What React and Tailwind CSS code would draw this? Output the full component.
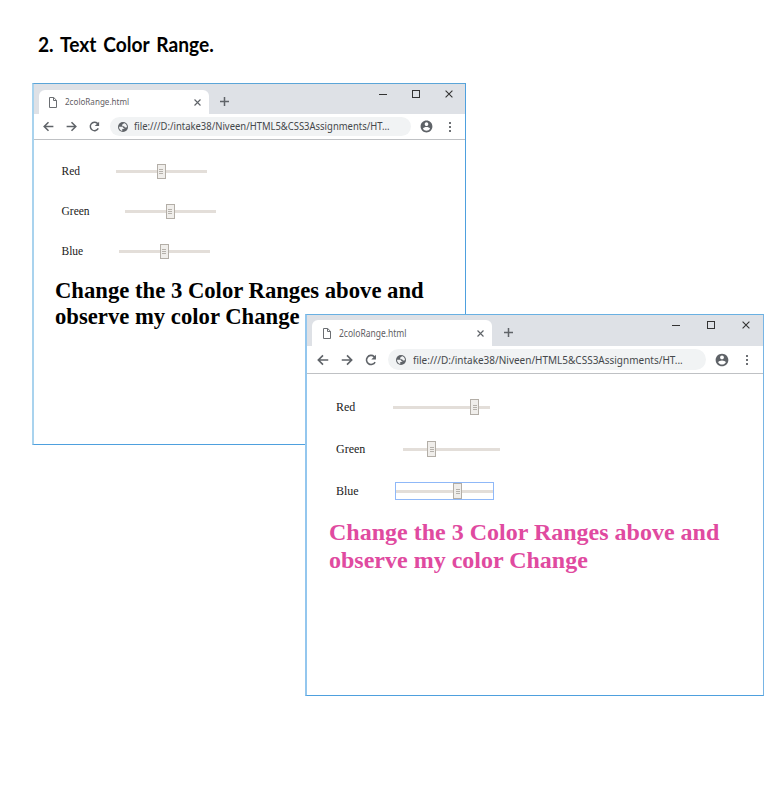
import React from "react";

const small = {
  frame: "left-[32px] top-[83px] w-[434px] h-[362px] border-l-2 border-l-[#a9d3ee] border-t-[#5ba5d8] border-r-[#4ea0de] border-b-[#4ea0de]",
  strip: "h-[30px]",
  tab: "ml-[5px] mt-[6px] w-[170px] h-[24px] pl-[10px] pr-[8px]",
  tabText: "text-[9.5px] ml-[8px] scale-x-[.85]",
  plus: "ml-[11px] mt-[13px]",
  controls: "mr-[12px] mt-[5px] gap-[22px]",
  bar: "h-[26px] pl-[8px] pr-[10px]",
  nav: "gap-[10px]",
  pill: "ml-[9px] w-[301px] h-[19px] pl-[8px]",
  url: "ml-[6px] text-[10.9px] scale-x-[.868]",
  user: "ml-[9px]",
  body: "pt-[12px]",
  row: "h-[40px] pl-[27.5px] text-[11.5px]",
  slider: "w-[91px] mb-px",
  thumb: "w-[9px] h-[15px]",
  heading: "ml-[21px] mt-[6px] text-[22.68px] leading-[26.4px] text-black",
  icon: 13,
  rows: [
    { name: "Red", label: "w-[54px]", pos: 41 },
    { name: "Green", label: "w-[63px]", pos: 41 },
    { name: "Blue", label: "w-[57px]", pos: 41 },
  ],
};

const large = {
  frame: "left-[305px] top-[314px] w-[459px] h-[382px] border-l-2 border-l-[#94c7ee] border-t-[#69b0e2] border-r-[#78b5e5] border-b-[#4ea0de]",
  strip: "h-[31px]",
  tab: "ml-[5px] mt-[5px] w-[180px] h-[26px] pl-[11px] pr-[8px]",
  tabText: "text-[10px] ml-[8px] scale-x-[.85]",
  plus: "ml-[12px] mt-[13px]",
  controls: "mr-[13px] mt-[5px] gap-[24px]",
  bar: "h-[28px] pl-[9px] pr-[11px]",
  nav: "gap-[10px]",
  pill: "ml-[10px] w-[318px] h-[21px] pl-[8px]",
  url: "ml-[7px] text-[11.5px] scale-x-[.868]",
  user: "ml-[9px]",
  body: "pt-[12px]",
  row: "h-[42px] pl-[29px] text-[12px]",
  slider: "w-[97px]",
  thumb: "w-[9px] h-[16px]",
  heading: "ml-[22px] mt-[6px] text-[24px] leading-[28px] text-[#e04aa0]",
  icon: 14,
  rows: [
    { name: "Red", label: "w-[57px]", pos: 77 },
    { name: "Green", label: "w-[67px]", pos: 24 },
    { name: "Blue", label: "w-[60px]", pos: 57, focus: true },
  ],
};

function Icon({ size, children }) {
  return (
    <svg width={size} height={size} viewBox="0 0 24 24" className="shrink-0">
      {children}
    </svg>
  );
}

function Cross({ size, width, color }) {
  return (
    <svg width={size} height={size} viewBox="0 0 8 8" className="shrink-0" stroke={color} strokeWidth={width}>
      <path d="M.6 .6 7.4 7.4M7.4 .6.6 7.4" />
    </svg>
  );
}

function Slider({ row, c }) {
  return (
    <div className={"relative flex h-[16px] shrink-0 items-center " + c.slider + (row.focus ? " outline outline-[#8fb8f8]" : "")}>
      <div className="h-[3px] w-full bg-[#e3ded9]" />
      <div
        className={"absolute flex flex-col items-center justify-center gap-px border border-[#b3aea7] bg-[#f0eeeb] " + c.thumb}
        style={{ left: row.pos }}
      >
        <i className="h-px w-[4px] bg-[#b5b1ab]" />
        <i className="h-px w-[4px] bg-[#b5b1ab]" />
        <i className="h-px w-[4px] bg-[#b5b1ab]" />
      </div>
    </div>
  );
}

function Browser({ c }) {
  return (
    <section className={"absolute flex flex-col border bg-white " + c.frame}>
      <div className={"flex shrink-0 items-start bg-[#dee1e6] " + c.strip}>
        <div className={"flex shrink-0 items-center rounded-t-[6px] bg-white " + c.tab}>
          <svg width="8" height="11" viewBox="0 0 8 11" fill="none" stroke="#6b6e72" className="shrink-0">
            <path d="M.5.5h4.2l2.8 2.8v7.2h-7zM4.5.5v3h3" />
          </svg>
          <span className={"origin-left whitespace-nowrap text-[#5f6064] " + c.tabText}>2coloRange.html</span>
          <span className="ml-auto flex"><Cross size={7} width={1.3} color="#5f6368" /></span>
        </div>
        <svg width="9" height="9" viewBox="0 0 9 9" stroke="#5f6368" strokeWidth="1.5" className={"shrink-0 " + c.plus}>
          <path d="M4.5 0v9M0 4.5h9" />
        </svg>
        <div className={"ml-auto flex items-center " + c.controls}>
          <span className="mr-[3px] h-px w-[8px] bg-[#333]" />
          <span className="h-[8px] w-[8px] border border-[#333]" />
          <span className="ml-[3px] flex h-[10px] items-center"><Cross size={8} width={1.1} color="#333" /></span>
        </div>
      </div>
      <div className={"flex shrink-0 items-center border-b border-[#bfc1c4] " + c.bar}>
        <div className={"flex items-center " + c.nav}>
          <Icon size={c.icon}><path fill="none" stroke="#5f6368" strokeWidth="2.8" d="M21 12H5M12 4l-8 8 8 8" /></Icon>
          <Icon size={c.icon}><path fill="none" stroke="#5f6368" strokeWidth="2.8" d="M3 12h16M12 4l8 8-8 8" /></Icon>
          <Icon size={c.icon}>
            <path fill="none" stroke="#5f6368" strokeWidth="2.7" d="M19 15.5a7.8 7.8 0 1 1-1.6-9.3l2 2.2" />
            <path fill="#5f6368" d="M20.500 3v8h-8z" />
          </Icon>
        </div>
        <div className={"flex shrink-0 items-center rounded-full bg-[#f1f3f4] " + c.pill}>
          <svg width="10" height="10" viewBox="2 2 20 20" className="shrink-0">
            <circle cx="12" cy="12" r="10" fill="#5f6368" />
            <path fill="#f1f3f4" d="M4 11.500h5.500c2 0 3 1 3 3h2v1.500h-4v3.800C6.800 19.300 4 16 4 11.500z" />
            <path fill="#f1f3f4" d="M13.500 4.200c3.600.8 6.300 3.800 6.500 7.600-.8 1-2 1-3.200 1-1.600 0-2.300-1-2.300-2.300h-4V8c0-1.200 1-1.800 2-1.800.8 0 1-.8 1-2z" />
          </svg>
          <span className={"origin-left whitespace-nowrap text-[#45484b] " + c.url}>
            file:///D:/intake38/Niveen/HTML5&amp;CSS3Assignments/HT...
          </span>
        </div>
        <svg width={c.icon} height={c.icon} viewBox="1 1 22 22" className={"shrink-0 " + c.user}>
          <path fill="#5f6368" d="M12 2C6.48 2 2 6.48 2 12s4.48 10 10 10 10-4.48 10-10S17.52 2 12 2zm0 3c1.66 0 3 1.34 3 3s-1.34 3-3 3-3-1.34-3-3 1.34-3 3-3zm0 14.2c-2.5 0-4.71-1.28-6-3.22.03-1.99 4-3.08 6-3.08s5.97 1.09 6 3.08c-1.29 1.94-3.5 3.22-6 3.22z" />
        </svg>
        <div className="ml-auto flex w-[10px] flex-col items-center gap-[2px]">
          <i className="h-[2px] w-[2px] bg-[#6d7074]" />
          <i className="h-[2px] w-[2px] bg-[#6d7074]" />
          <i className="h-[2px] w-[2px] bg-[#6d7074]" />
        </div>
      </div>
      <div className={"font-['Liberation_Serif',serif] " + c.body}>
        {c.rows.map((row) => (
          <div key={row.name} className={"flex items-center text-[#1a1a1a] " + c.row}>
            <span className={"shrink-0 " + row.label}>{row.name}</span>
            <Slider row={row} c={c} />
          </div>
        ))}
        <h1 className={"whitespace-nowrap font-bold " + c.heading}>
          Change the 3 Color Ranges above and
          <br />
          observe my color Change
        </h1>
      </div>
    </section>
  );
}

export default function App() {
  return (
    <main className="relative h-[785px] w-[782px] overflow-hidden bg-white font-['Noto_Sans',sans-serif]">
      <h2 className="ml-[38px] origin-left scale-x-[.94] pt-[32px] font-['Lato',sans-serif] text-[20.4px] leading-[24px] font-bold text-black [word-spacing:2.4px]">
        2. Text Color Range.
      </h2>
      <Browser c={small} />
      <Browser c={large} />
    </main>
  );
}
